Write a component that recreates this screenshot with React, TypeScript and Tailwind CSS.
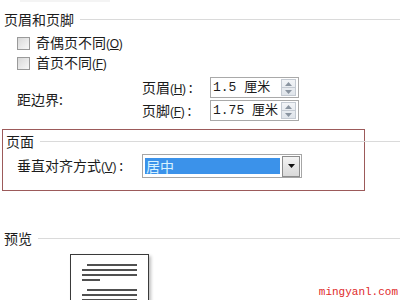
import React from "react";

const cjk = { fontFamily: '"Noto Sans CJK SC", "Liberation Sans", sans-serif' };

function Key({ k }: { k: string }) {
  return (
    <span className="text-[12px] font-['Liberation_Sans'] tracking-tight">
      (<span className="underline">{k}</span>)
    </span>
  );
}

function Header({ title, extend }: { title: string; extend?: boolean }) {
  return (
    <div className="flex items-center h-[14px] pl-[4px]">
      <span className="text-[14px] leading-[14px] text-[#1c1c1c]">{title}</span>
      <div className={"flex-1 h-px bg-[#dadada] ml-[6px] " + (extend ? "mr-[-37px]" : "")} />
    </div>
  );
}

function Check({ label, k }: { label: string; k: string }) {
  return (
    <div className="flex items-center h-[14px] pl-[17px] gap-[6px]">
      <div className="w-[13px] h-[13px] border border-[#9a9a9a] bg-gradient-to-br from-[#d8d8d8] to-[#f8f8f8]" />
      <span className="text-[14px] leading-[14px] text-[#1c1c1c]">
        {label}
        <Key k={k} />
      </span>
    </div>
  );
}

function Spin() {
  return (
    <div className="w-[15px] h-[17px] shrink-0 flex flex-col border border-[#c4cad2] bg-gradient-to-b from-[#f2f4f7] to-[#dfe4ea]">
      <div className="flex-1 flex items-center justify-center border-b border-[#c4cad2]">
        <svg width="7" height="4" viewBox="0 0 7 4"><path d="M0 4 L3.5 0 L7 4Z" fill="#8a94a0" /></svg>
      </div>
      <div className="flex-1 flex items-center justify-center">
        <svg width="7" height="4" viewBox="0 0 7 4"><path d="M0 0 L3.5 4 L7 0Z" fill="#8a94a0" /></svg>
      </div>
    </div>
  );
}

function Field({ label, k, value }: { label: string; k: string; value: string }) {
  return (
    <div className="flex items-center h-[21px]">
      <span className="w-[68px] text-[14px] leading-[14px] text-[#1c1c1c]">
        {label}
        <Key k={k} />
        <span className="ml-[3px]">:</span>
      </span>
      <div className="w-[89px] h-[21px] border border-[#a9a9a9] bg-white flex items-center pl-[2px] pr-[2px] justify-between">
        <span
          className="text-[13px] leading-[14px] text-[#1c1c1c] whitespace-nowrap"
          style={{ fontFamily: '"Liberation Mono", "Noto Sans CJK SC", monospace' }}
        >
          {value}
        </span>
        <Spin />
      </div>
    </div>
  );
}

export default function App() {
  return (
    <div className="w-[400px] h-[300px] bg-white overflow-hidden relative" style={cjk}>
      <div className="h-[12px] pl-[20px] pt-0">
        <div className="w-[90px] h-[2px] bg-[#f4f4f4]" />
      </div>
      <Header title="页眉和页脚" />
      <div className="mt-[10px]">
        <Check label="奇偶页不同" k="O" />
      </div>
      <div className="mt-[6px]">
        <Check label="首页不同" k="F" />
      </div>

      <div className="mt-[7px] flex items-center">
        <div className="w-[142px] pl-[17px] text-[14px] leading-[14px] text-[#1c1c1c]">距边界:</div>
        <div className="flex flex-col gap-[2px]">
          <Field label="页眉" k="H" value="1.5 厘米" />
          <Field label="页脚" k="F" value="1.75 厘米" />
        </div>
      </div>

      <div className="mt-[8px] ml-[2px] w-[363px] border border-[#9c5a5a] pt-[4px] pb-[12px]">
        <div className="ml-[-1px]">
          <Header title="页面" extend />
        </div>
        <div className="mt-[6px] flex items-center h-[24px]">
          <div className="w-[139px] pl-[14px] text-[14px] leading-[14px] text-[#1c1c1c]">
            垂直对齐方式
            <Key k="V" />
            <span className="ml-[3px]">:</span>
          </div>
          <div className="w-[160px] h-[24px] border border-[#a6a6a6] bg-white flex items-center pl-[2px] pr-[1px] gap-[2px]">
            <div className="flex-1 h-[16px] bg-[#3b92ea] flex items-center pl-[1px]">
              <span className="text-[14px] leading-[14px] text-[#d8f2ff]">居中</span>
            </div>
            <div className="w-[18px] h-[21px] border border-[#8c8c8c] bg-gradient-to-b from-[#f4f4f4] to-[#d9d9d9] flex items-center justify-center">
              <svg width="7" height="4" viewBox="0 0 7 4"><path d="M0 0 L3.5 4 L7 0Z" fill="#111" /></svg>
            </div>
          </div>
        </div>
      </div>

      <div className="mt-[40px]">
        <Header title="预览" />
      </div>

      <div className="mt-[9px] ml-[70px] w-[79px] h-[60px] border border-[#3a3a3a] bg-white shadow-[2px_2px_3px_rgba(0,0,0,0.25)] pt-[9px] pl-[11px] pr-[11px] flex flex-col">
        <div className="h-[2px] bg-[#505050] ml-[5px]" />
        <div className="h-[2px] bg-[#505050] mt-[3px]" />
        <div className="h-[2px] bg-[#505050] mt-[3px]" />
        <div className="h-[2px] bg-[#505050] mt-[3px] w-[18px]" />
        <div className="h-[2px] bg-[#505050] mt-[8px] ml-[5px]" />
        <div className="h-[2px] bg-[#505050] mt-[3px]" />
        <div className="h-[2px] bg-[#505050] mt-[3px]" />
      </div>

      <div
        className="absolute right-[2px] bottom-[2px] text-[11px] leading-[11px] text-[#e02a2a]"
        style={{ fontFamily: '"Liberation Mono", monospace' }}
      >
        mingyanl.com
      </div>
    </div>
  );
}
